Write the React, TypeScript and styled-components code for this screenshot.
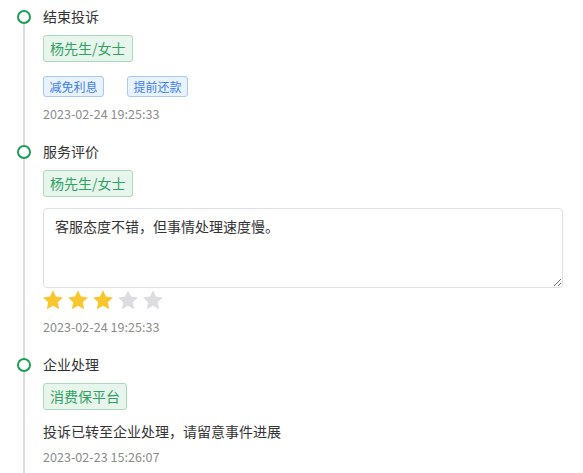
import styled, { createGlobalStyle } from "styled-components";

const GlobalStyle = createGlobalStyle`
  html, body {
    margin: 0;
    background: #fff;
    font-family: "Noto Sans CJK SC", "Microsoft YaHei", sans-serif;
    color: #333;
  }
`;

const Timeline = styled.div`
  display: flex;
  flex-direction: column;
`;

const Item = styled.div`
  display: flex;
`;

const Rail = styled.div`
  width: 14px;
  margin: 0 12px 0 17px;
  display: flex;
  flex-direction: column;
  align-items: center;
`;

const Segment = styled.div<{ $hidden?: boolean; $grow?: boolean }>`
  width: 2px;
  background: ${(p) => (p.$hidden ? "transparent" : "#dcdcdf")};
  ${(p) => (p.$grow ? "flex: 1;" : "height: 10px;")}
`;

const Dot = styled.div`
  width: 14px;
  height: 14px;
  flex-shrink: 0;
  box-sizing: border-box;
  border: 2.5px solid #1f9d57;
  border-radius: 50%;
`;

const Content = styled.div<{ $last?: boolean }>`
  flex: 1;
  min-width: 0;
  padding: 6px 20px ${(p) => (p.$last ? "6px" : "11px")} 0;
`;

const Title = styled.div`
  font-size: 14px;
  line-height: 20px;
  color: #333;
`;

const Row = styled.div<{ $top: number }>`
  display: flex;
  gap: 23px;
  margin-top: ${(p) => p.$top}px;
`;

const Tag = styled.span<{ $small?: boolean }>`
  display: inline-block;
  border: 1px solid ${(p) => (p.$small ? "#a9c8f6" : "#a6dab8")};
  border-radius: 3px;
  background: ${(p) => (p.$small ? "#e9f2ff" : "#e8f5ed")};
  color: ${(p) => (p.$small ? "#3f7ee6" : "#2fa35f")};
  font-size: ${(p) => (p.$small ? "12px" : "14px")};
  line-height: ${(p) => (p.$small ? "19px" : "25px")};
  padding: ${(p) => (p.$small ? "0 5.5px" : "0 6px")};
`;

const Time = styled.div<{ $top: number }>`
  margin-top: ${(p) => p.$top}px;
  font-size: 12.6px;
  line-height: 20px;
  color: #8c8c8c;
`;

const Text = styled.div`
  margin-top: 11px;
  font-size: 14px;
  line-height: 20px;
  color: #333;
`;

const Comment = styled.textarea`
  display: block;
  box-sizing: border-box;
  width: 100%;
  height: 80px;
  margin-top: 11px;
  padding: 7px 11px;
  border: 1px solid #dcdfe6;
  border-radius: 4px;
  font-family: inherit;
  font-size: 14px;
  line-height: 20px;
  color: #333;
  resize: vertical;
  outline: none;
`;

const Rating = styled.div`
  display: flex;
  gap: 5px;
  margin-top: 2px;
`;

const Star = ({ on }: { on: boolean }) => (
  <svg width="20" height="20" viewBox="1.6 1.6 20.8 20.8">
    <path
      d="M12 1.8l3.1 6.6 7.2.9-5.3 5 1.4 7.2L12 17.9l-6.4 3.6 1.4-7.2-5.3-5 7.2-.9z"
      fill={on ? "#f9c62d" : "#dcdde1"}
    />
  </svg>
);

interface StepProps {
  first?: boolean;
  last?: boolean;
  title: string;
  children: React.ReactNode;
}

const Step = ({ first, last, title, children }: StepProps) => (
  <Item>
    <Rail>
      <Segment $hidden={first} />
      <Dot />
      <Segment $grow />
    </Rail>
    <Content $last={last}>
      <Title>{title}</Title>
      {children}
    </Content>
  </Item>
);

export default function App() {
  const score = 3;

  return (
    <>
      <GlobalStyle />
      <Timeline>
        <Step first title="结束投诉">
          <Row $top={9}>
            <Tag>杨先生/女士</Tag>
          </Row>
          <Row $top={14}>
            <Tag $small>减免利息</Tag>
            <Tag $small>提前还款</Tag>
          </Row>
          <Time $top={7}>2023-02-24 19:25:33</Time>
        </Step>
        <Step title="服务评价">
          <Row $top={9}>
            <Tag>杨先生/女士</Tag>
          </Row>
          <Comment readOnly defaultValue="客服态度不错，但事情处理速度慢。" />
          <Rating>
            {[1, 2, 3, 4, 5].map((n) => (
              <Star key={n} on={n <= score} />
            ))}
          </Rating>
          <Time $top={7}>2023-02-24 19:25:33</Time>
        </Step>
        <Step last title="企业处理">
          <Row $top={9}>
            <Tag>消费保平台</Tag>
          </Row>
          <Text>投诉已转至企业处理，请留意事件进展</Text>
          <Time $top={6}>2023-02-23 15:26:07</Time>
        </Step>
      </Timeline>
    </>
  );
}
